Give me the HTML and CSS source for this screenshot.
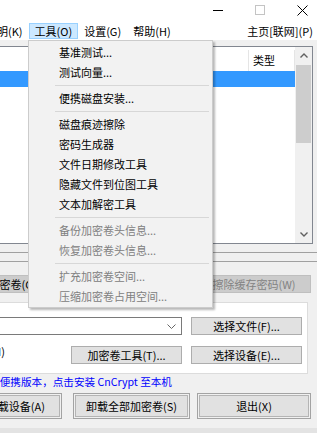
FILE: index.html
```html
<!DOCTYPE html>
<html lang="zh-CN">
<head>
    <meta charset="UTF-8">
    <meta name="viewport" content="width=device-width, initial-scale=1.0">
    <title>CnCrypt</title>
    <link rel="stylesheet" href="styles.css">
</head>
<body>
    <div class="window">
        <div class="titlebar">
            <span class="caption-btn">
                <svg width="10" height="10" viewBox="0 0 10 10"><path d="M0 5.5H10" stroke="#000" stroke-width="1"/></svg>
            </span>
            <span class="caption-btn">
                <svg width="10" height="10" viewBox="0 0 10 10"><rect x="0.5" y="0.5" width="9" height="9" fill="none" stroke="#c4c4c4" stroke-width="1"/></svg>
            </span>
            <span class="caption-btn close">
                <svg width="11" height="11" viewBox="0 0 11 11"><path d="M0.5 0.5L10.5 10.5M10.5 0.5L0.5 10.5" stroke="#000" stroke-width="1"/></svg>
            </span>
        </div>
        <div class="menubar">
            <span class="menu-item">说明(K)</span>
            <span class="menu-item active">工具(O)</span>
            <span class="menu-item">设置(G)</span>
            <span class="menu-item">帮助(H)</span>
            <span class="menu-spacer"></span>
            <span class="menu-item home">主页[联网](P)</span>
        </div>
        <div class="main">
            <div class="list">
                <div class="list-body">
                    <div class="list-header">
                        <span class="col-fill"></span>
                        <span class="col-type">类型</span>
                    </div>
                    <div class="list-row selected"></div>
                </div>
                <div class="scrollbar">
                    <span class="arrow">
                        <svg width="8" height="5" viewBox="0 0 8 5"><path d="M0.5 4.5L4 1L7.5 4.5" fill="none" stroke="#606060" stroke-width="1.4"/></svg>
                    </span>
                    <span class="thumb"></span>
                    <span class="track"></span>
                    <span class="arrow">
                        <svg width="8" height="5" viewBox="0 0 8 5"><path d="M0.5 0.5L4 4L7.5 0.5" fill="none" stroke="#606060" stroke-width="1.4"/></svg>
                    </span>
                </div>
            </div>
            <div class="etched"></div>
            <div class="etched"></div>
            <div class="btn-row top">
                <button class="btn flat col1">创建加密卷(C)</button>
                <button class="btn flat col2">加密卷属性(V)</button>
                <button class="btn flat col3 disabled">擦除缓存密码(W)</button>
            </div>
            <div class="volume-panel">
                <div class="panel-row">
                    <div class="combo">
                        <svg width="9" height="5" viewBox="0 0 9 5"><path d="M0.5 0.5L4.5 4.5L8.5 0.5" fill="none" stroke="#666" stroke-width="1"/></svg>
                    </div>
                    <button class="btn small">选择文件(F)...</button>
                </div>
                <div class="panel-row">
                    <span class="check-label"><span>保存历史(I)</span></span>
                    <button class="btn small">加密卷工具(T)...</button>
                    <button class="btn small">选择设备(E)...</button>
                </div>
            </div>
            <div class="portable-link">当前为便携版本，点击安装 CnCrypt 至本机</div>
            <div class="btn-row bottom">
                <button class="btn big col1">自动加载设备(A)</button>
                <button class="btn big col2">卸载全部加密卷(S)</button>
                <button class="btn big col3">退出(X)</button>
            </div>
            <div class="statusbar"></div>
        </div>

        <div class="dropdown">
            <div class="dd-item">基准测试...</div>
            <div class="dd-item">测试向量...</div>
            <div class="dd-sep"></div>
            <div class="dd-item">便携磁盘安装...</div>
            <div class="dd-sep"></div>
            <div class="dd-item">磁盘痕迹擦除</div>
            <div class="dd-item">密码生成器</div>
            <div class="dd-item">文件日期修改工具</div>
            <div class="dd-item">隐藏文件到位图工具</div>
            <div class="dd-item">文本加解密工具</div>
            <div class="dd-sep"></div>
            <div class="dd-item disabled">备份加密卷头信息...</div>
            <div class="dd-item disabled">恢复加密卷头信息...</div>
            <div class="dd-sep"></div>
            <div class="dd-item disabled">扩充加密卷空间...</div>
            <div class="dd-item disabled">压缩加密卷占用空间...</div>
        </div>
    </div>
</body>
</html>
```

FILE: styles.css
```css
* { box-sizing: border-box; }
body {
    margin: 0;
    width: 317px;
    height: 433px;
    overflow: hidden;
    background: #f0f0f0;
    font-family: "Noto Sans CJK SC", sans-serif;
    font-size: 11px;
    color: #000;
}
.window {
    position: relative;
    width: 367px;
    margin-left: -50px;
}

/* title bar */
.titlebar {
    height: 22px;
    background: #fff;
    display: flex;
    justify-content: flex-end;
}
.caption-btn {
    width: 42px;
    height: 22px;
    display: flex;
    justify-content: center;
    padding-top: 5px;
}
.caption-btn.close { margin-right: -6px; }

/* menu bar */
.menubar {
    height: 18px;
    background: #fff;
    display: flex;
    padding-left: 30px;
}
.menu-item {
    height: 16px;
    margin-top: 1px;
    padding: 0 5px;
    border: 1px solid transparent;
    line-height: 14px;
    white-space: nowrap;
}
.menu-item.active {
    background: #cce8ff;
    border-color: #99d1ff;
}
.menu-item.home { padding-right: 3px; }
.menu-spacer { flex: 1; }

/* main area */
.main {
    padding: 6px 4px 0 10px;
}
.list {
    display: flex;
    height: 198px;
    border: 1px solid #828790;
    background: #fff;
}
.list-body {
    flex: 1;
    display: flex;
    flex-direction: column;
}
.list-header {
    display: flex;
    height: 24px;
}
.col-fill { flex: 1; }
.col-type {
    width: 47px;
    margin-top: 3px;
    padding-left: 4px;
    border-left: 1px solid #e5e5e5;
    border-right: 1px solid #e5e5e5;
    line-height: 21px;
}
.list-row { height: 16px; }
.list-row.selected { background: #3399ff; }
.scrollbar {
    width: 17px;
    background: #f0f0f0;
    display: flex;
    flex-direction: column;
}
.scrollbar .arrow {
    height: 17px;
    display: flex;
    align-items: center;
    justify-content: center;
}
.scrollbar .thumb {
    height: 78px;
    margin: 1px 1px 0;
    background: #cdcdcd;
}
.scrollbar .track { flex: 1; }

.etched {
    height: 1px;
    margin-top: 8px;
    margin-right: -4px;
    background: #a0a0a0;
}

/* buttons */
.btn {
    font: inherit;
    color: #000;
    padding: 0;
    background: #e1e1e1;
    border: 1px solid #adadad;
    white-space: nowrap;
    flex-shrink: 0;
}
.btn-row {
    display: flex;
}
.btn-row .col1 { width: 102px; text-align: right; }
.btn-row .col2 { width: 117px; margin-left: 11px; }
.btn-row .col3 { width: 114px; margin-left: 7px; }
.btn-row.top { margin-top: 13px; }
.btn-row.top .col1 { padding-right: 25px; }
.btn-row.bottom .col1 { padding-right: 16px; }
.btn.flat {
    height: 18px;
    background: #cccccc;
    border-color: #bfbfbf;
}
.btn.disabled { color: #838383; }
.btn.big {
    height: 26px;
    border-color: #a3a3a3;
    box-shadow: inset 0 0 0 1px #f0f0f0, inset 0 0 0 2px #b4b4b4;
}
.btn-row.bottom { margin-top: 3px; }

/* volume panel */
.volume-panel {
    margin-top: 9px;
    margin-right: 5px;
    height: 72px;
    padding: 14px 5px 0 0;
    background: #fff;
    border: 1px solid #dcdcdc;
    border-left: none;
}
.panel-row {
    display: flex;
    gap: 9px;
}
.panel-row + .panel-row { margin-top: 11px; }
.btn.small {
    width: 111px;
    height: 18px;
}
.combo {
    flex: 1;
    height: 18px;
    border: 1px solid #7a7a7a;
    background: #fff;
    display: flex;
    align-items: center;
    justify-content: flex-end;
    padding-right: 5px;
}
.check-label {
    flex: 1;
    min-width: 0;
    display: flex;
    justify-content: flex-end;
    padding-right: 57px;
    line-height: 10px;
    white-space: nowrap;
}

.portable-link {
    margin-left: 8px;
    font-size: 10.6px;
    line-height: 16px;
    color: #0000ff;
    white-space: nowrap;
}
.statusbar {
    margin: 9px -4px 0 -10px;
    height: 6px;
    background: #e3e3e3;
}

/* dropdown of the tools menu */
.dropdown {
    position: absolute;
    left: 78px;
    top: 40px;
    width: 185px;
    padding: 1px 2px;
    background: #f2f2f2;
    border: 1px solid #cccccc;
    box-shadow: 2px 2px 2px rgba(0, 0, 0, 0.28);
}
.dd-item {
    height: 20px;
    line-height: 20px;
    padding-left: 28px;
    white-space: nowrap;
}
.dd-item.disabled { color: #808080; }
.dd-sep {
    height: 1px;
    margin: 3px 1px 2px 24px;
    background: #d7d7d7;
}
```
